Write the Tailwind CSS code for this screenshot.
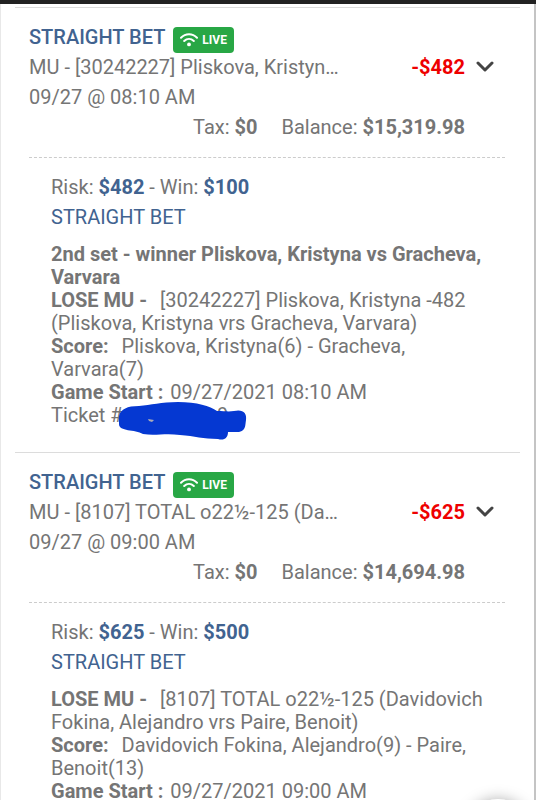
<!DOCTYPE html>
<html lang="en">
<head>
  <meta charset="UTF-8">
  <meta name="viewport" content="width=device-width, initial-scale=1.0">
  <title>Bet History</title>
  <script src="https://cdn.jsdelivr.net/npm/@tailwindcss/browser@4"></script>
</head>
<body class="bg-white font-[Roboto,sans-serif] text-xl text-[#757575]">
<header class="h-1 bg-[#222222]"></header>

<main class="border-l border-r-2 border-l-[#e8e8e8] border-r-[#c4c4c4] px-[14px] pt-[3px]">
  <!-- First bet -->
  <article class="border-t border-[#dcdcdc] pt-[14px] pr-[15px] pb-[25px] pl-[14px]">
    <div class="border-b border-dashed border-[#cccccc] pb-[15px] leading-[30px]">
      <div class="flex h-[30px] items-center gap-2">
        <h2 class="font-medium text-[#416390]">STRAIGHT BET</h2>
        <span class="mt-[6px] flex h-[26px] items-center gap-1 rounded bg-[#28a745] px-[7px] text-xs font-bold text-white">
          <svg class="h-[14px] w-[18px]" viewBox="0 0 18 14" fill="none" stroke="currentColor" stroke-width="2" stroke-linecap="round">
            <path d="M1 4.8C5.500 0.100 12.500 0.100 17 4.800M4.200 8C7 5.300 11 5.300 13.800 8"/>
            <circle cx="9" cy="11.400" r="1.900" fill="currentColor" stroke="none"/>
          </svg>
          LIVE
        </span>
      </div>
      <div class="flex items-center">
        <p class="w-[310px] truncate">MU - [30242227] Pliskova, Kristyna -482</p>
        <span class="ml-auto font-bold text-[#ee0000]">-$482</span>
        <button type="button" aria-label="Toggle details" class="mr-[11px] ml-[11px] text-[#444444]">
          <svg class="h-[12px] w-[18px]" viewBox="0 0 18 12" fill="none" stroke="currentColor" stroke-width="3" stroke-linecap="round" stroke-linejoin="round"><path d="M2 2L9 9L16 2"/></svg>
        </button>
      </div>
      <p>09/27 @ 08:10 AM</p>
      <p class="flex justify-end gap-6 pr-[40px]">
        <span>Tax: <b>$0</b></span>
        <span>Balance: <b>$15,319.98</b></span>
      </p>
    </div>

    <div class="pt-[14px] pl-[22px]">
      <div class="leading-[30px]">
        <p>Risk: <b class="text-[#416390]">$482</b> - Win: <b class="text-[#416390]">$100</b></p>
        <h3 class="text-[#416390]">STRAIGHT BET</h3>
      </div>
      <div class="pt-[11px] pr-[20px] leading-[23px]">
        <p class="font-bold">2nd set - winner Pliskova, Kristyna vs Gracheva, Varvara</p>
        <p><b class="mr-2">LOSE MU -</b> [30242227] Pliskova, Kristyna -482 (Pliskova, Kristyna vrs Gracheva, Varvara)</p>
        <p><b class="mr-2">Score:</b> Pliskova, Kristyna(6) - Gracheva, Varvara(7)</p>
        <p><b class="mr-0.5">Game Start :</b> 09/27/2021 08:10 AM</p>
        <div class="relative">
          Ticket #
          <!-- Marker over the ticket number -->
          <svg class="absolute -top-[2px] left-[68px] h-[42px] w-[130px]" viewBox="0 0 130 42">
            <text x="98" y="20" fill="#757575" font-family="Roboto, sans-serif" font-size="20">9</text>
            <path fill="#0538d2" d="M0 14C2 7 8 4 20 4C32 3 42 0 59 0C78 0 91 4 98 9C106 9 109 10 115 9C124 7 128 11 127 18C126 24 127 28 120 30L109 30C109 36 105 39 99 37C84 37 76 34 61 33C46 31 36 34 24 32C16 27 0 30 0 22Z"/>
            <path fill="#aaaab8" d="M29 17L35 18L33 20L30 19Z"/>
          </svg>
        </div>
      </div>
    </div>
  </article>

  <!-- Second bet -->
  <article class="border-t border-[#dcdcdc] pt-[14px] pr-[15px] pb-[25px] pl-[14px]">
    <div class="border-b border-dashed border-[#cccccc] pb-[15px] leading-[30px]">
      <div class="flex h-[30px] items-center gap-2">
        <h2 class="font-medium text-[#416390]">STRAIGHT BET</h2>
        <span class="mt-[6px] flex h-[26px] items-center gap-1 rounded bg-[#28a745] px-[7px] text-xs font-bold text-white">
          <svg class="h-[14px] w-[18px]" viewBox="0 0 18 14" fill="none" stroke="currentColor" stroke-width="2" stroke-linecap="round">
            <path d="M1 4.8C5.500 0.100 12.500 0.100 17 4.800M4.200 8C7 5.300 11 5.300 13.800 8"/>
            <circle cx="9" cy="11.400" r="1.900" fill="currentColor" stroke="none"/>
          </svg>
          LIVE
        </span>
      </div>
      <div class="flex items-center">
        <p class="w-[310px] truncate">MU - [8107] TOTAL o22½-125 (Davidovich Fokina)</p>
        <span class="ml-auto font-bold text-[#ee0000]">-$625</span>
        <button type="button" aria-label="Toggle details" class="mr-[11px] ml-[11px] text-[#444444]">
          <svg class="h-[12px] w-[18px]" viewBox="0 0 18 12" fill="none" stroke="currentColor" stroke-width="3" stroke-linecap="round" stroke-linejoin="round"><path d="M2 2L9 9L16 2"/></svg>
        </button>
      </div>
      <p>09/27 @ 09:00 AM</p>
      <p class="flex justify-end gap-6 pr-[40px]">
        <span>Tax: <b>$0</b></span>
        <span>Balance: <b>$14,694.98</b></span>
      </p>
    </div>

    <div class="pt-[14px] pl-[22px]">
      <div class="leading-[30px]">
        <p>Risk: <b class="text-[#416390]">$625</b> - Win: <b class="text-[#416390]">$500</b></p>
        <h3 class="text-[#416390]">STRAIGHT BET</h3>
      </div>
      <div class="pt-[11px] pr-[20px] leading-[23px]">
        <p><b class="mr-2">LOSE MU -</b> [8107] TOTAL o22½-125 (Davidovich Fokina, Alejandro vrs Paire, Benoit)</p>
        <p><b class="mr-2">Score:</b> Davidovich Fokina, Alejandro(9) - Paire, Benoit(13)</p>
        <p><b class="mr-0.5">Game Start :</b> 09/27/2021 09:00 AM</p>
      </div>
    </div>
  </article>
</main>

<!-- Floating button, peeking in from the bottom edge -->
<button type="button" aria-label="Menu" class="fixed right-[6px] -bottom-[63px] size-16 rounded-full bg-white shadow-[0_2px_16px_rgba(0,0,0,0.4)]"></button>
</body>
</html>
